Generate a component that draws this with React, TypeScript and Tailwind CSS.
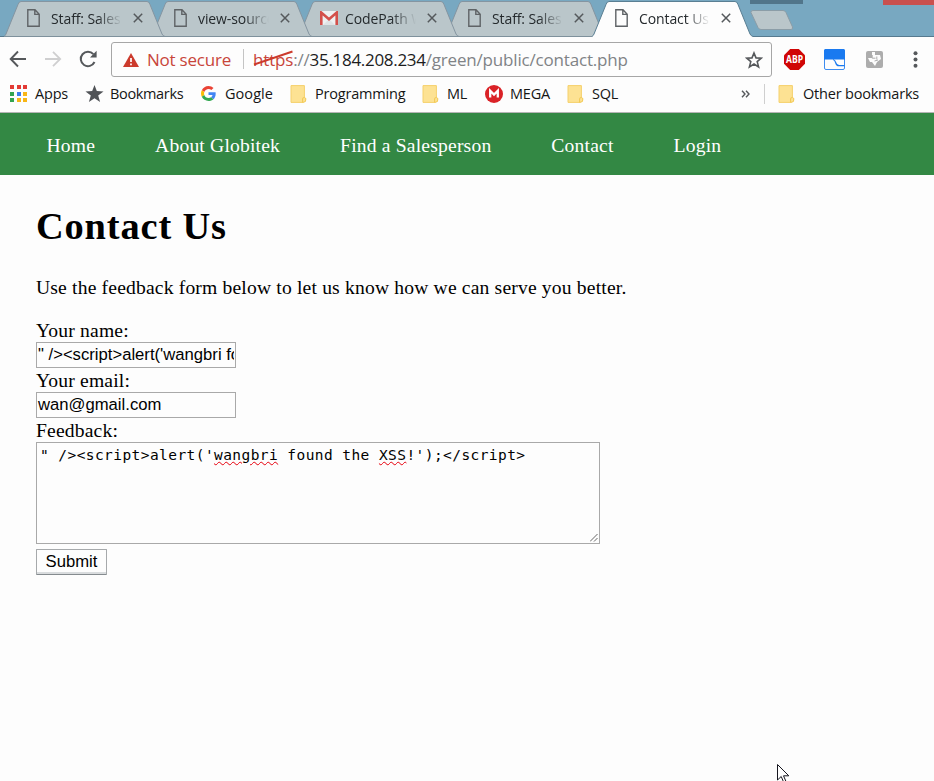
import type { ReactNode } from 'react';

const UI = "font-['Open_Sans','Noto_Sans',sans-serif]";

function PageIcon() {
  return (
    <svg width="13" height="18" viewBox="0 0 13 18" fill="none" stroke="#5f6366" strokeWidth="1.4" className="block">
      <path d="M.8 .8H8L12.2 5.2V17.2H.8ZM7.8 .8V5.4H12.2" />
    </svg>
  );
}

function GmailIcon() {
  return (
    <svg width="18" height="14" viewBox="0 0 18 14" className="block">
      <rect width="18" height="14" rx="1" fill="#eef1f2" />
      <path d="M3 14L9 8L15 14Z" fill="#dfe3e5" />
      <path d="M1.3 14V1.6L9 8.3L16.7 1.6V14" fill="none" stroke="#d3504b" strokeWidth="2.6" />
    </svg>
  );
}

function Tab({ title, active, stack, gmail }: { title: string; active?: boolean; stack: string; gmail?: boolean }) {
  return (
    <div className={`relative -ml-[15px] h-[37px] w-[162px] shrink-0 ${stack}`}>
      <svg className="absolute inset-0" width="162" height="37" viewBox="0 0 162 37">
        <path d="M0 37V36.5C1 36 1.5 35 2 34L14 4.5Q15 1.5 17 1.5H143Q145 1.5 146 4.5L158 34Q159 36 161 36.5V37Z" fill={active ? '#fdfdfd' : '#bac6ca'} />
        <path d="M0 36.5C1 36 1.5 35 2 34L14 4.5Q15 1.5 17 1.5H143Q145 1.5 146 4.5L158 34Q159 36 161 36.5" fill="none" stroke={active ? '#5a7f93' : '#8595a1'} />
        {!active && <path d="M0 36.5H162" stroke="#7f919c" />}
      </svg>
      <div className="relative flex h-full items-center pl-[23px] pb-px">
        <div className={gmail ? '-ml-[1px] w-[25px]' : 'w-[24px]'}>{gmail ? <GmailIcon /> : <PageIcon />}</div>
        <div className="w-[71px] overflow-hidden whitespace-nowrap text-[14px] tracking-[-0.1px] text-[#24292c] [mask-image:linear-gradient(to_right,black_65%,transparent)]">
          {title}
        </div>
        <svg className="ml-[11px]" width="10" height="10" viewBox="0 0 10 10">
          <path d="M.8 .8L9.2 9.2M9.2 .8L.8 9.2" stroke="#55595c" strokeWidth="1.5" />
        </svg>
      </div>
    </div>
  );
}

function Folder() {
  return (
    <svg width="17" height="18" viewBox="0 0 17 18" className="block">
      <path d="M1 .6H14.4V12.5H13V17.4H1Z" fill="#fde293" stroke="#f5d06c" />
      <path d="M12.6 17.3V13.5Q14.2 11.2 15.9 13.6Q16.4 17.5 13 17.4Z" fill="#fde293" stroke="#f2c955" />
    </svg>
  );
}

function AppsIcon() {
  const colors = ['#e33b35', '#e33b35', '#e33b35', '#34a450', '#3b7ded', '#f8b616', '#34a450', '#f8b616', '#f8b616'];
  return (
    <div className="grid w-[17px] grid-cols-3 gap-[2.5px]">
      {colors.map((c, i) => (
        <span key={i} className="h-1 w-1" style={{ background: c }} />
      ))}
    </div>
  );
}

function StarSolid() {
  return (
    <svg width="19" height="18" viewBox="0 0 19 18">
      <path d="M9.5 0L11.8 6.1L18.5 6.4L13.2 10.5L15.1 17L9.5 13.3L3.9 17L5.8 10.5L.5 6.4L7.2 6.1Z" fill="#505357" />
    </svg>
  );
}

function GoogleIcon() {
  return (
    <svg width="15" height="15" viewBox="0 0 48 48">
      <path fill="#EA4335" d="M24 9.5c3.54 0 6.71 1.22 9.21 3.6l6.85-6.85C35.9 2.38 30.47 0 24 0 14.62 0 6.51 5.38 2.56 13.22l7.98 6.19C12.43 13.72 17.74 9.5 24 9.5z" />
      <path fill="#4285F4" d="M46.98 24.55c0-1.57-.15-3.09-.38-4.55H24v9.02h12.94c-.58 2.96-2.26 5.48-4.78 7.18l7.73 6c4.51-4.18 7.09-10.36 7.09-17.65z" />
      <path fill="#FBBC05" d="M10.53 28.59c-.48-1.45-.76-2.99-.76-4.59s.27-3.14.76-4.59l-7.98-6.19C.92 16.46 0 20.12 0 24c0 3.88.92 7.54 2.56 10.78l7.97-6.19z" />
      <path fill="#34A853" d="M24 48c6.48 0 11.93-2.13 15.89-5.81l-7.73-6c-2.15 1.45-4.92 2.3-8.16 2.3-6.26 0-11.57-4.22-13.47-9.91l-7.98 6.19C6.51 42.62 14.62 48 24 48z" />
    </svg>
  );
}

function MegaIcon() {
  return (
    <svg width="18" height="18" viewBox="0 0 18 18">
      <circle cx="9" cy="9" r="9" fill="#da2227" />
      <path d="M5.2 12.5V5.8L9 9.6L12.8 5.8V12.5" fill="none" stroke="white" strokeWidth="2.3" />
    </svg>
  );
}

function Bookmark({ icon, iconWidth = 'w-[25px]', width, tracking = 'tracking-[-0.2px]', children }: { icon: ReactNode; iconWidth?: string; width: string; tracking?: string; children: ReactNode }) {
  return (
    <div className={`flex h-full shrink-0 items-center ${width}`}>
      <div className={`shrink-0 ${iconWidth}`}>{icon}</div>
      <span className={`mt-px whitespace-nowrap ${tracking}`}>{children}</span>
    </div>
  );
}

function NewTab() {
  return (
    <svg className="-ml-[4px] mt-[9px] shrink-0" width="44" height="22" viewBox="0 0 44 22">
      <path d="M3 1.5H33Q35 1.5 36 3.5L42.5 18Q43 20.5 41 20.5H11Q9 20.5 8 18.5L1 3.5Q.6 1.5 3 1.5Z" fill="#bac6ca" stroke="#8b9da7" />
    </svg>
  );
}

function TabStrip() {
  return (
    <div className="relative flex h-[37px] items-start bg-[#78a8c1] pl-[19px]">
      <div className="absolute inset-x-0 bottom-0 h-px bg-[#567a8f]" />
      <Tab title="Staff: Sales" stack="z-40" />
      <Tab title="view-source" stack="z-30" />
      <Tab title="CodePath W" stack="z-20" gmail />
      <Tab title="Staff: Sales" stack="z-10" />
      <Tab title="Contact Us" stack="z-50" active />
      <NewTab />
      <div className="absolute left-[750px] top-0 h-1 w-[53px] bg-[#51758a]" />
      <div className="absolute right-0 top-0 h-[5px] w-[51px] bg-[#c9504e]" />
    </div>
  );
}

function AddressBar() {
  return (
    <div className="flex h-[42px] items-center pl-[9px] pt-[2px]">
      <svg width="18" height="18" viewBox="0 0 18 18" fill="none" stroke="#55585b" strokeWidth="1.9">
        <path d="M17 9H2M9 1.5L1.7 9L9 16.5" />
      </svg>
      <svg className="ml-[18px]" width="17" height="18" viewBox="0 0 17 18" fill="none" stroke="#cfcfd0" strokeWidth="1.8">
        <path d="M0 9H15M8 1.8L15.2 9L8 16.2" />
      </svg>
      <svg className="ml-[17px]" width="19" height="18" viewBox="0 0 19 18" fill="none" stroke="#55585b" strokeWidth="2">
        <path d="M15.5 12A7.2 7.2 0 1 1 14.4 4.2" />
        <path d="M17.6 .8V7.4H11Z" fill="#55585b" stroke="none" />
      </svg>
      <div className="ml-[13px] flex h-[35px] w-[661px] items-center rounded-[3px] border border-[#a6a6a6] pl-[11px] text-[17px]">
        <svg width="16" height="14" viewBox="0 0 16 14" className="mt-[2px] shrink-0">
          <path d="M8 0L16 14H0Z" fill="#cc3a2c" />
          <path d="M8 5V9M8 10.4V12.2" stroke="white" strokeWidth="1.7" />
        </svg>
        <span className="ml-[8px] mt-[2px] w-[96px] whitespace-nowrap tracking-[-0.22px] text-[#c8453a]">Not secure</span>
        <span className="h-5 w-px bg-[#c4c4c4]" />
        <div className="relative ml-[9px] mt-[2px] w-[492px] whitespace-nowrap tracking-[-0.18px] text-[#808386]">
          <span className="text-[#c8453a]">https</span>://<span className="tracking-[-0.3px] text-[#1c1c1c]">35.184.208.234</span>/green/public/contact.php
          <svg className="absolute left-0 top-[3px]" width="41" height="17" viewBox="0 0 41 17">
            <path d="M1 14.5L39.5 1.5" stroke="#cc3a2c" strokeWidth="2" />
          </svg>
        </div>
        <svg width="18" height="18" viewBox="0 0 18 18" fill="none" stroke="#55585b" strokeWidth="1.6" className="mt-px">
          <path d="M9 2L11 6.9L16.3 7.2L12.2 10.6L13.6 15.9L9 13L4.4 15.9L5.8 10.6L1.7 7.2L7 6.9Z" />
        </svg>
      </div>
      <svg className="ml-[12px]" width="21" height="21" viewBox="0 0 21 21">
        <path d="M6.2 0H14.8L21 6.2V14.8L14.8 21H6.2L0 14.8V6.2Z" fill="#d00606" />
        <text x="10.5" y="14.3" textAnchor="middle" textLength="17" lengthAdjust="spacingAndGlyphs" fill="white" fontFamily="Open Sans" fontWeight="700" fontSize="10.5">ABP</text>
      </svg>
      <svg className="ml-[19px]" width="21" height="21" viewBox="0 0 21 21">
        <rect x=".5" y=".5" width="20" height="20" rx="1.5" fill="#fdfdfd" stroke="#3d8cf0" />
        <path d="M0 1.5Q0 0 1.5 0H19.5Q21 0 21 1.5V10.5H0Z" fill="#1a7af0" />
        <path d="M9 10.5Q11 11 11.6 13.5Q12.4 16.7 15 16.7H20.5" fill="none" stroke="#1a7af0" strokeWidth="1.2" />
      </svg>
      <svg className="ml-[21px]" width="17" height="17" viewBox="0 0 17 17">
        <rect width="17" height="17" rx="2" fill="#adadad" />
        <path d="M6 1H9V4H14L15 8L11 11L9 15L6 11L4 11L2 7H6Z" fill="#fdfdfd" />
        <path d="M6.2 4V7.2H9.5M10.8 5.5V8.5M8.5 10L12 9" stroke="#adadad" fill="none" />
      </svg>
      <svg className="ml-[30px]" width="5" height="17" viewBox="0 0 5 17" fill="#55585b">
        <circle cx="2.5" cy="2.2" r="2" /><circle cx="2.5" cy="8.5" r="2" /><circle cx="2.5" cy="14.8" r="2" />
      </svg>
    </div>
  );
}

function BookmarksBar() {
  return (
    <div className="flex h-[33px] items-center pb-[4px] pl-[10px] text-[14.5px] text-[#151515]">
      <Bookmark icon={<AppsIcon />} width="w-[75px]">Apps</Bookmark>
      <Bookmark icon={<StarSolid />} width="w-[116px]" tracking="tracking-[-0.35px]">Bookmarks</Bookmark>
      <Bookmark icon={<GoogleIcon />} iconWidth="w-[24px]" width="w-[89px]" tracking="tracking-[0.05px]">Google</Bookmark>
      <Bookmark icon={<Folder />} width="w-[132px]">Programming</Bookmark>
      <Bookmark icon={<Folder />} width="w-[63px]">ML</Bookmark>
      <Bookmark icon={<MegaIcon />} width="w-[82px]">MEGA</Bookmark>
      <Bookmark icon={<Folder />} width="w-[174px]">SQL</Bookmark>
      <svg width="10" height="8" viewBox="0 0 10 8" fill="none" stroke="#55585b" strokeWidth="1.4" className="shrink-0">
        <path d="M1 .7L4 4L1 7.3M5 .7L8 4L5 7.3" />
      </svg>
      <span className="ml-[13px] mr-[13px] h-5 w-px shrink-0 bg-[#cfcfcf]" />
      <Bookmark icon={<Folder />} width="w-[150px]">Other bookmarks</Bookmark>
    </div>
  );
}

function Squiggle({ children }: { children: ReactNode }) {
  return <span className="underline decoration-red-600 decoration-wavy decoration-[1px] underline-offset-[1px]">{children}</span>;
}

function FieldLabel({ children }: { children: ReactNode }) {
  return <label className="pt-px leading-[23px]">{children}</label>;
}

export default function App() {
  return (
    <div className="relative flex h-[781px] w-[934px] flex-col overflow-hidden bg-[#fdfdfd] font-['Liberation_Serif',serif] text-black">
      <header className={`h-[113px] shrink-0 border-b border-[#b5b5b5] ${UI}`}>
        <TabStrip />
        <AddressBar />
        <BookmarksBar />
      </header>
      <nav className="flex h-[62px] shrink-0 items-center gap-[60px] bg-[#338844] pb-px pl-[46.5px] pt-[4px] text-[19.6px] tracking-[0.18px] text-white">
        <span>Home</span>
        <span>About Globitek</span>
        <span>Find a Salesperson</span>
        <span>Contact</span>
        <span>Login</span>
      </nav>
      <main className="flex flex-col items-start pl-9 text-[19.6px] leading-6 tracking-[0.17px]">
        <h1 className="mt-[27px] text-[38.4px] font-bold leading-[48px] tracking-[0.85px]">Contact Us</h1>
        <p className="mt-[26px] whitespace-nowrap">Use the feedback form below to let us know how we can serve you better.</p>
        <div className="mt-[18px] flex flex-col items-start">
          <FieldLabel>Your name:</FieldLabel>
          <div className="h-[26px] w-[200px] border border-[#a9a9a9] px-px font-['Liberation_Sans',sans-serif] text-[16.67px] leading-[24px] tracking-normal">
            <div className="overflow-hidden whitespace-nowrap">" /&gt;&lt;script&gt;alert('wangbri found the XSS!');&lt;/script&gt;</div>
          </div>
          <FieldLabel>Your email:</FieldLabel>
          <div className="h-[26px] w-[200px] border border-[#a9a9a9] px-px font-['Liberation_Sans',sans-serif] text-[16.67px] leading-[24px] tracking-normal">wan@gmail.com</div>
          <FieldLabel>Feedback:</FieldLabel>
          <div className="relative h-[102px] w-[564px] whitespace-pre border border-[#a9a9a9] pl-[3px] pt-px font-['DejaVu_Sans_Mono',monospace] text-[14.5px] leading-[22px] tracking-[0.43px]">
            {'" /><script>alert(\''}<Squiggle>wangbri</Squiggle>{' found the '}<Squiggle>XSS</Squiggle>{"!');</script>"}
            <svg className="absolute bottom-px right-px" width="8" height="8" viewBox="0 0 8 8">
              <path d="M0 7.5L7.5 0M4 7.5L7.5 4" stroke="#666" />
            </svg>
          </div>
          <button className="mt-[5px] h-[26px] w-[71px] rounded-[1px] border border-[#a6a9ab] border-b-[#858b8f] bg-[#fdfdfd] font-['Liberation_Sans',sans-serif] text-[16.67px] leading-[22px] tracking-normal shadow-[inset_0_-2px_0_#d9dcde]">Submit</button>
        </div>
      </main>
      <svg className="absolute left-[777px] top-[764px]" width="13" height="19" viewBox="0 0 13 19">
        <path d="M.5 .5V16L4.2 12.5L6.8 18.5L9 17.5L6.5 11.8H11.8Z" fill="white" stroke="#16161f" />
      </svg>
    </div>
  );
}
